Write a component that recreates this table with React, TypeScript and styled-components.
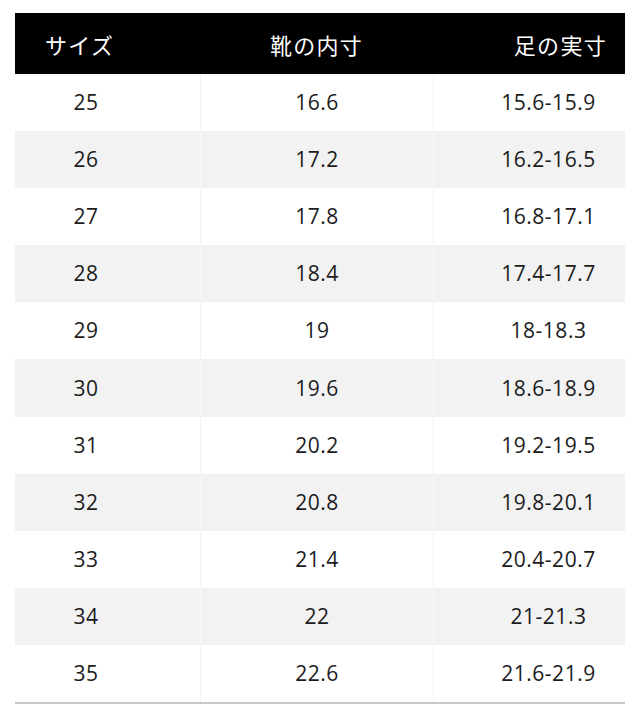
import React from "react";
import styled, { createGlobalStyle } from "styled-components";

const Global = createGlobalStyle`
  html, body { margin: 0; padding: 0; background: #ffffff; }
  body { font-family: "Open Sans", "Noto Sans CJK JP", sans-serif; }
`;

const Page = styled.div`
  width: 640px;
  height: 722px;
  padding: 13px 15px 0 15px;
  box-sizing: border-box;
  background: #ffffff;
`;

const Table = styled.div`
  width: 610px;
  display: grid;
  grid-template-columns: 185px 233px 192px;
  border-bottom: 2px solid #c8c8c8;
`;

const HeadCell = styled.div<{ $align: "left" | "center" | "right"; $pl?: number; $pr?: number }>`
  height: 61px;
  background: #000000;
  color: #ffffff;
  display: flex;
  align-items: center;
  justify-content: ${(p) => (p.$align === "left" ? "flex-start" : p.$align === "right" ? "flex-end" : "center")};
  padding-left: ${(p) => p.$pl ?? 0}px;
  padding-right: ${(p) => p.$pr ?? 0}px;
  font-family: "Noto Sans CJK JP", "Noto Sans", sans-serif;
  font-size: 22px;
  letter-spacing: 1.3px;
  box-sizing: border-box;
`;

const Cell = styled.div<{ $grey: boolean; $first?: boolean; $pl?: number; $pr?: number }>`
  height: 57.1px;
  background: ${(p) => (p.$grey ? "#f2f2f2" : "#ffffff")};
  border-left: ${(p) => (p.$first ? "none" : `1px solid ${p.$grey ? "#f8f8f8" : "#f2f2f2"}`)};
  display: flex;
  align-items: center;
  justify-content: center;
  padding-left: ${(p) => p.$pl ?? 0}px;
  padding-right: ${(p) => p.$pr ?? 0}px;
  box-sizing: border-box;
  color: #1c1c1c;
  font-family: "Open Sans", sans-serif;
  font-weight: 500;
  font-size: 21px;
  letter-spacing: 0.5px;
  padding-bottom: 1px;
`;

const rows: [string, string, string][] = [
  ["25", "16.6", "15.6-15.9"],
  ["26", "17.2", "16.2-16.5"],
  ["27", "17.8", "16.8-17.1"],
  ["28", "18.4", "17.4-17.7"],
  ["29", "19", "18-18.3"],
  ["30", "19.6", "18.6-18.9"],
  ["31", "20.2", "19.2-19.5"],
  ["32", "20.8", "19.8-20.1"],
  ["33", "21.4", "20.4-20.7"],
  ["34", "22", "21-21.3"],
  ["35", "22.6", "21.6-21.9"],
];

export default function App() {
  return (
    <>
      <Global />
      <Page>
        <Table>
          <HeadCell $align="left" $pl={30}>サイズ</HeadCell>
          <HeadCell $align="center">靴の内寸</HeadCell>
          <HeadCell $align="right" $pr={18}>足の実寸</HeadCell>
          {rows.map((r, i) => {
            const grey = i % 2 === 1;
            return (
              <React.Fragment key={r[0]}>
                <Cell $grey={grey} $first $pr={43}>{r[0]}</Cell>
                <Cell $grey={grey}>{r[1]}</Cell>
                <Cell $grey={grey} $pl={38}>{r[2]}</Cell>
              </React.Fragment>
            );
          })}
        </Table>
      </Page>
    </>
  );
}
